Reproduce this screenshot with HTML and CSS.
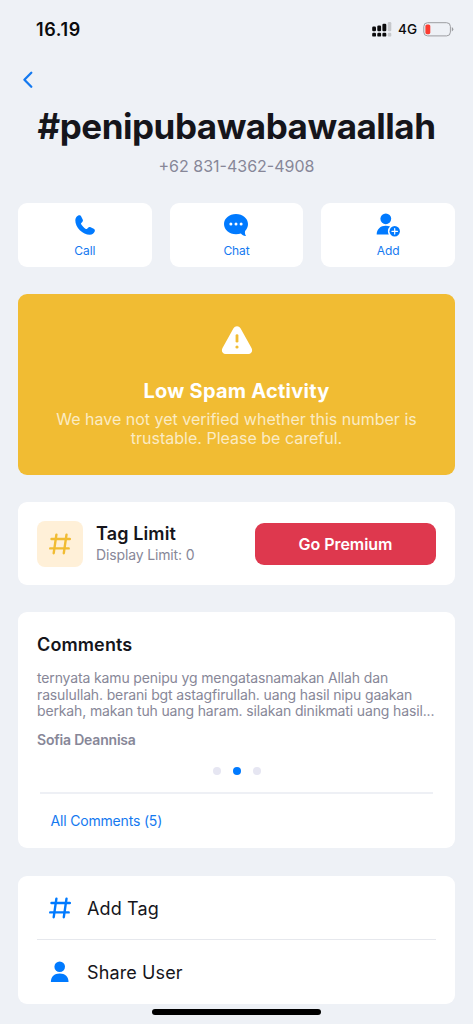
FILE: index.html
```html
<!DOCTYPE html>
<html lang="id">
<head>
<meta charset="utf-8">
<meta name="viewport" content="width=device-width, initial-scale=1">
<title>Contact</title>
<link rel="stylesheet" href="styles.css">
</head>
<body>
<svg class="defs" width="0" height="0" aria-hidden="true">
  <symbol id="hash" viewBox="0 0 22 22">
    <path d="M7.400 1.600 4.700 20.200M17.500 1.600 14.800 20.200M2.500 6H20.900M1.200 15.400H19.700" fill="none" stroke="currentColor" stroke-width="2.400" stroke-linecap="round"/>
  </symbol>
</svg>
<div class="screen">
  <header class="status">
    <span class="time">16.19</span>
    <div class="indicators">
      <svg width="20" height="15" viewBox="0 0 20 15">
        <g fill="#0b0b0d"><rect x="0.2" y="4.600" width="3.800" height="4.600" rx="1.200"/><rect x="5.300" y="3.600" width="3.800" height="5.600" rx="1.200"/><rect x="10.400" y="1.800" width="3.900" height="7.400" rx="1.200"/>
        <rect x="0.2" y="10.800" width="3.800" height="3.800" rx="1.200"/><rect x="5.300" y="10.800" width="3.800" height="3.800" rx="1.200"/><rect x="10.400" y="10.800" width="3.900" height="3.800" rx="1.200"/></g>
        <g fill="#c6c8cc"><rect x="15.800" y="0" width="3.500" height="9.200" rx="1.200"/><rect x="15.800" y="10.800" width="3.500" height="3.800" rx="1.200"/></g>
      </svg>
      <span class="network">4G</span>
      <svg width="31" height="15" viewBox="0 0 31 15">
        <rect x="0.8" y="0.7" width="26.600" height="13.200" rx="3.800" fill="none" stroke="#9c9da1" stroke-width="1"/>
        <rect x="2.400" y="2.400" width="4.900" height="9.800" rx="1.600" fill="#fb3b30"/>
        <path d="M28.800 5.100q1.500.7 1.500 2.200t-1.500 2.200z" fill="#9c9da1"/>
      </svg>
    </div>
  </header>
  <nav class="nav">
    <svg width="12" height="18" viewBox="0 0 12 18"><path d="M9.300 1.800 2.400 8.800 9.300 15.800" fill="none" stroke="#1479f0" stroke-width="2.300" stroke-linecap="round" stroke-linejoin="round"/></svg>
  </nav>
  <h1 class="name">#penipubawabawaallah</h1>
  <p class="phone">+62 831-4362-4908</p>

  <section class="actions">
    <div class="card action">
      <svg width="26" height="26" viewBox="0 0 26 26"><path d="M3.300 8.100C3.400 5.800 4.900 4 6.700 3.300c1.100-.4 2 .1 2.500 1.100l1.500 3.100c.5 1 .2 2-.6 2.700l-.8.800c-.4.400-.4.800-.1 1.300 1.100 1.900 2.700 3.500 4.600 4.600.5.300 1 .3 1.300-.1l.8-.900c.7-.8 1.700-1.100 2.700-.6l3.100 1.500c1 .5 1.400 1.400 1.100 2.400-.6 1.900-2.600 3.600-4.900 3.600C10.700 22.800 3.100 15.600 3.300 8.100z" fill="#007aff"/></svg>
      <span>Call</span>
    </div>
    <div class="card action">
      <svg width="26" height="26" viewBox="0 0 26 26"><path d="M13 1.900C6.200 1.900 1 6.300 1 12s5.200 10.200 12 10.200c1.700 0 3.400-.3 4.900-.8 1.300 1.500 2.700 2.400 4.600 2.700.4 0 .5-.3.300-.6-.9-1.400-1.100-2.900-.7-4.500C23.900 17.200 25 14.800 25 12 25 6.300 19.800 1.900 13 1.900z" fill="#007aff"/><g fill="#fff"><circle cx="7.900" cy="12" r="1.500"/><circle cx="13" cy="12" r="1.500"/><circle cx="18.100" cy="12" r="1.500"/></g></svg>
      <span>Chat</span>
    </div>
    <div class="card action">
      <svg width="26" height="26" viewBox="0 0 26 26"><g fill="#007aff"><circle cx="10.800" cy="6.800" r="5.400"/><path d="M1.700 22.600C1.600 17.100 5.500 13.700 10.800 13.700c1.600 0 3.100.3 4.300.9-1.400 1.200-2.200 2.800-2.200 4.600 0 1.200.3 2.400.9 3.400z"/><circle cx="19.700" cy="19.300" r="5.200"/></g><path d="M19.700 16.500v5.600M16.900 19.300h5.600" stroke="#fff" stroke-width="1.200" stroke-linecap="round"/></svg>
      <span>Add</span>
    </div>
  </section>

  <section class="banner">
    <svg width="32" height="30" viewBox="0 0 32 30"><path d="M12.500 2.300C14-.4 18-.4 19.500 2.300l11 19.600c1.500 2.800.2 6.100-3.100 6.100H4.600c-3.300 0-4.600-3.300-3.100-6.100z" fill="#fff"/><path d="M16 9.600v5.600" stroke="#f1bc33" stroke-width="2.800" stroke-linecap="round"/><circle cx="16" cy="21" r="1.600" fill="#f1bc33"/></svg>
    <h2>Low Spam Activity</h2>
    <p>We have not yet verified whether this number is<br>trustable. Please be careful.</p>
  </section>

  <section class="card limit">
    <div class="tile"><svg width="22" height="22"><use href="#hash"/></svg></div>
    <div class="limit-text">
      <h3>Tag Limit</h3>
      <p>Display Limit: 0</p>
    </div>
    <button class="premium">Go Premium</button>
  </section>

  <section class="card comments">
    <h3>Comments</h3>
    <p class="body">ternyata kamu penipu yg mengatasnamakan Allah dan<br>rasulullah. berani bgt astagfirullah. uang hasil nipu gaakan<br>berkah, makan tuh uang haram. silakan dinikmati uang hasil...</p>
    <p class="author">Sofia Deannisa</p>
    <div class="dots"><i></i><i class="on"></i><i></i></div>
    <div class="all">All Comments (5)</div>
  </section>

  <section class="card menu">
    <div class="row"><svg width="22" height="22"><use href="#hash"/></svg><span>Add Tag</span></div>
    <div class="row"><svg width="22" height="22" viewBox="0 0 22 22"><g fill="#007aff"><circle cx="10.700" cy="5.700" r="5.300"/><path d="M1.900 21.100C1.700 15.900 5.400 12.500 10.700 12.500s9 3.400 8.800 8.600z"/></g></svg><span>Share User</span></div>
  </section>
  <div class="home"></div>
</div>
</body>
</html>
```
FILE: styles.css
```css
* { box-sizing: border-box; margin: 0; padding: 0; }
body { background: #eef1f6; font-family: Inter, "Liberation Sans", sans-serif; color: #15151b; }
svg { display: block; flex: none; }
.defs { position: absolute; }
.screen { width: 473px; height: 1024px; overflow: hidden; padding: 0 18px; display: flex; flex-direction: column; white-space: nowrap; }
.card { background: #fff; border-radius: 9px; }
.status { height: 58px; padding: 0 0 0 18px; display: flex; justify-content: space-between; align-items: center; }
.time { font-size: 18px; font-weight: 600; letter-spacing: 0.6px; color: #0b0b0d; }
.indicators { display: flex; align-items: center; gap: 6px; margin-right: 1px; }
.network { font-size: 13.500px; font-weight: 500; color: #0b0b0d; }
.nav { height: 43px; padding: 13px 0 0 4px; }
.name { height: 50px; line-height: 50px; text-align: center; font-size: 35px; font-weight: 700; letter-spacing: -0.480px; }
.phone { height: 52px; line-height: 31px; text-align: center; font-size: 16px; color: #878798; }
.actions { display: grid; grid-template-columns: repeat(3, 1fr); gap: 18px; height: 64px; }
.action { display: flex; flex-direction: column; align-items: center; padding-top: 9px; color: #1479f0; font-size: 12px; line-height: 16px; letter-spacing: -0.1px; }
.action span { margin-top: 5px; }
.banner { margin-top: 27px; height: 181px; border-radius: 9px; background: #f1bc33; display: flex; flex-direction: column; align-items: center; padding-top: 32px; text-align: center; color: #fff; }
.banner h2 { margin-top: 22px; font-size: 20px; line-height: 26px; font-weight: 700; letter-spacing: 0.25px; }
.banner p { margin-top: 6px; font-size: 16px; line-height: 19px; color: #fbebc3; }
.limit { margin-top: 27px; height: 83px; padding: 0 19px; display: flex; align-items: center; }
.tile { width: 46px; height: 46px; border-radius: 8px; background: #fff0d8; color: #f1bc33; display: flex; align-items: center; justify-content: center; }
.limit-text { margin: 1px 0 0 13px; flex: 1; }
.limit h3, .comments h3 { font-size: 18px; line-height: 22px; font-weight: 600; letter-spacing: 0.12px; }
.limit p { font-size: 14px; line-height: 20px; letter-spacing: -0.14px; color: #878798; }
.premium { width: 181px; height: 42px; border: 0; border-radius: 9px; background: #de384e; color: #fff; font: 600 16px Inter, "Liberation Sans", sans-serif; letter-spacing: -0.050px; }
.comments { margin-top: 27px; height: 236px; padding: 22px 19px 0; }
.body { margin-top: 14px; font-size: 14px; line-height: 16.600px; letter-spacing: -0.140px; color: #878798; }
.author { margin-top: 11px; font-size: 14px; line-height: 18px; font-weight: 600; letter-spacing: -0.2px; color: #878798; }
.dots { margin-top: 18px; display: flex; justify-content: center; gap: 12px; }
.dots i { width: 8px; height: 8px; border-radius: 50%; background: #e6e6f2; }
.dots .on { background: #007aff; }
.all { margin: 17px 3px 0; border-top: 2px solid #eef0f5; padding: 18px 0 0 10.500px; font-size: 14px; line-height: 18px; letter-spacing: -0.180px; color: #1479f0; }
.menu { margin-top: 28px; height: 128px; padding: 0 19px; }
.row { height: 64px; display: flex; align-items: center; gap: 16px; padding-left: 12px; font-size: 18px; letter-spacing: 0.120px; }
.row svg { color: #007aff; }
.row:first-child { height: 63px; padding-top: 1px; }
.row + .row { height: 65px; border-top: 1px solid #e6e8ed; }
.home { width: 169px; height: 6px; margin: 5px auto 0; border-radius: 3px; background: #000; }
```
